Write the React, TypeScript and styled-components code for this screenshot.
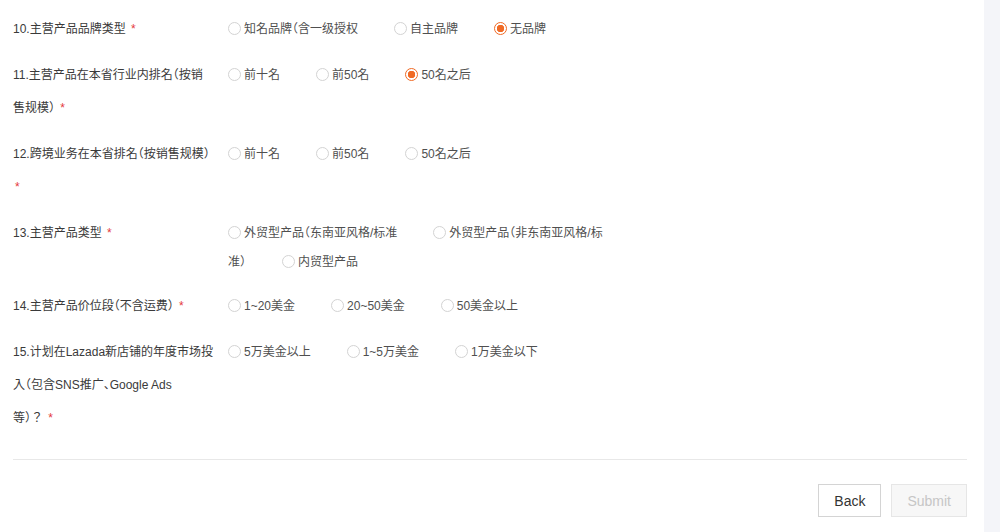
import React, { useState } from "react";
import styled, { createGlobalStyle } from "styled-components";

interface Question {
  id: number;
  title: string;
  options: string[];
  selected?: number;
}

const questions: Question[] = [
  {
    id: 10,
    title: "10.主营产品品牌类型",
    options: ["知名品牌（含一级授权", "自主品牌", "无品牌"],
    selected: 2,
  },
  {
    id: 11,
    title: "11.主营产品在本省行业内排名（按销售规模）",
    options: ["前十名", "前50名", "50名之后"],
    selected: 2,
  },
  {
    id: 12,
    title: "12.跨境业务在本省排名（按销售规模）",
    options: ["前十名", "前50名", "50名之后"],
  },
  {
    id: 13,
    title: "13.主营产品类型",
    options: ["外贸型产品（东南亚风格/标准", "外贸型产品（非东南亚风格/标准）", "内贸型产品"],
  },
  {
    id: 14,
    title: "14.主营产品价位段（不含运费）",
    options: ["1~20美金", "20~50美金", "50美金以上"],
  },
  {
    id: 15,
    title: "15.计划在Lazada新店铺的年度市场投入（包含SNS推广、Google Ads\n等）？",
    options: ["5万美金以上", "1~5万美金", "1万美金以下"],
  },
];

const GlobalStyle = createGlobalStyle`
  html, body {
    margin: 0;
    padding: 0;
    background: #fff;
  }
  body {
    font-family: "Liberation Sans", "Noto Sans CJK JP", "Noto Sans CJK SC", sans-serif;
    font-feature-settings: "halt";
  }
`;

const App: React.FC = () => {
  const [answers, setAnswers] = useState<Record<number, number | undefined>>(
    () =>
      questions.reduce(
        (acc, q) => ({ ...acc, [q.id]: q.selected }),
        {} as Record<number, number | undefined>
      )
  );

  const pick = (id: number, index: number) => {
    setAnswers({ ...answers, [id]: index });
  };

  return (
    <Page>
      <GlobalStyle />
      <Main>
        {questions.map((q) => (
          <QuestionRow key={q.id}>
            <Label>
              {q.title} <Required>*</Required>
            </Label>
            <Options>
              {q.options.map((text, index) => (
                <Option key={index} onClick={() => pick(q.id, index)}>
                  <Radio checked={answers[q.id] === index} />
                  {text}
                </Option>
              ))}
            </Options>
          </QuestionRow>
        ))}
        <Divider />
        <Footer>
          <Button>Back</Button>
          <Button disabled>Submit</Button>
        </Footer>
      </Main>
      <SideRail />
    </Page>
  );
};

export default App;

const Page = styled.div`
  display: flex;
  min-height: 532px;
`;

const Main = styled.div`
  flex: 1;
  padding: 13px 17px 15px 13px;
`;

const SideRail = styled.div`
  width: 16px;
  background: #f4f5f9;
`;

const QuestionRow = styled.div`
  display: flex;
  align-items: flex-start;
  margin-bottom: 13px;
`;

const Label = styled.div`
  width: 201px;
  margin-right: 14px;
  flex-shrink: 0;
  font-size: 12px;
  line-height: 33px;
  color: #3a3a3a;
  white-space: pre-line;
`;

const Required = styled.span`
  color: #e4393c;
  font-size: 12px;
  margin-left: 2px;
`;

const Options = styled.div`
  width: 385px;
  padding-top: 2px;
  font-size: 12px;
  line-height: 29px;
  color: #4f4f4f;
`;

const Option = styled.label`
  margin-right: 36px;
  cursor: pointer;
`;

const Radio = styled.span<{ checked?: boolean }>`
  display: inline-block;
  box-sizing: border-box;
  width: 13px;
  height: 13px;
  margin-right: 3px;
  vertical-align: -2px;
  border-radius: 50%;
  border: 1px solid ${(props) => (props.checked ? "#f06a25" : "#d3d3d3")};
  background: ${(props) =>
    props.checked
      ? "radial-gradient(circle, #f06a25 0, #f06a25 3.5px, #fff 4px)"
      : "#fff"};
`;

const Divider = styled.div`
  height: 1px;
  background: #e8e8e8;
  margin-top: 24px;
`;

const Footer = styled.div`
  display: flex;
  justify-content: flex-end;
  gap: 10px;
  margin-top: 24px;
`;

const Button = styled.button`
  height: 33px;
  padding: 0 15px;
  font-family: "Liberation Sans", sans-serif;
  font-size: 14px;
  color: #333;
  background: #fff;
  border: 1px solid #d4d4d4;
  cursor: pointer;

  &:disabled {
    color: #c6c6c6;
    background: #f7f7f7;
    border-color: #e6e6e6;
    cursor: not-allowed;
  }
`;
